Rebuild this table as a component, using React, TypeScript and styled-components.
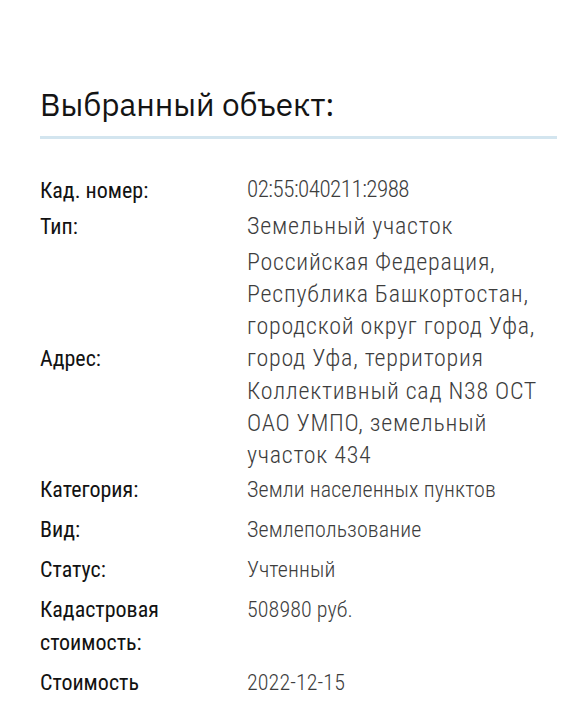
import React from "react";
import styled, { createGlobalStyle } from "styled-components";

const GlobalStyle = createGlobalStyle`
  html, body { margin: 0; padding: 0; background: #ffffff; overflow: hidden; }
  body { font-family: Roboto, "Noto Sans", sans-serif; }
`;

const Page = styled.main`
  padding: 85px 5px 0 40px;
`;

const Title = styled.h2`
  margin: 0;
  font-family: "IBM Plex Sans", "Noto Sans", sans-serif;
  font-weight: 400;
  font-size: 31.5px;
  line-height: 40px;
  color: #141414;
  padding-bottom: 11px;
  border-bottom: 3px solid #d3e5ef;
`;

const Table = styled.div`
  margin-top: 33px;
  display: grid;
  grid-template-columns: 207px 1fr;
`;

const Row = styled.div<{ $dense?: boolean; $middle?: boolean }>`
  display: contents;
  & > * {
    padding: ${(p) => (p.$dense ? "1.5px 0" : "0 0 7px")};
    align-self: ${(p) => (p.$middle ? "center" : "start")};
  }
`;

const Label = styled.div`
  font-family: Roboto, "Noto Sans", sans-serif;
  font-stretch: condensed;
  font-weight: 400;
  font-size: 22px;
  line-height: 33px;
  color: #121212;
  white-space: pre-line;
`;

const Value = styled.div<{ $large?: boolean; $numeric?: boolean }>`
  font-family: Roboto, "Noto Sans", sans-serif;
  font-stretch: condensed;
  font-weight: 300;
  font-size: ${(p) => (p.$numeric ? "23px" : p.$large ? "24px" : "22px")};
  line-height: ${(p) => (p.$large ? "32.3px" : "33px")};
  letter-spacing: ${(p) => (p.$numeric ? "-0.5px" : p.$large ? "0.75px" : "0.1px")};
  color: #3d3d3d;
  white-space: pre-line;
`;

const rows: { label: string; value: string; dense?: boolean; middle?: boolean; numeric?: boolean }[] = [
  { label: "Кад. номер:", value: "02:55:040211:2988", dense: true, middle: true, numeric: true },
  { label: "Тип:", value: "Земельный участок", dense: true, middle: true },
  {
    label: "Адрес:",
    value:
      "Российская Федерация,\nРеспублика Башкортостан,\nгородской округ город Уфа,\nгород Уфа, территория\nКоллективный сад N38 ОСТ\nОАО УМПО, земельный\nучасток 434",
    dense: true,
    middle: true,
  },
  { label: "Категория:", value: "Земли населенных пунктов" },
  { label: "Вид:", value: "Землепользование" },
  { label: "Статус:", value: "Учтенный" },
  { label: "Кадастровая\nстоимость:", value: "508980 руб." },
  { label: "Стоимость\nопределена:", value: "2022-12-15" },
];

export default function App() {
  return (
    <>
      <GlobalStyle />
      <Page>
        <Title>Выбранный объект:</Title>
        <Table>
          {rows.map((r) => (
            <Row key={r.label} $dense={r.dense} $middle={r.middle}>
              <Label>{r.label}</Label>
              <Value $large={r.dense} $numeric={r.numeric}>
                {r.value}
              </Value>
            </Row>
          ))}
        </Table>
      </Page>
    </>
  );
}
